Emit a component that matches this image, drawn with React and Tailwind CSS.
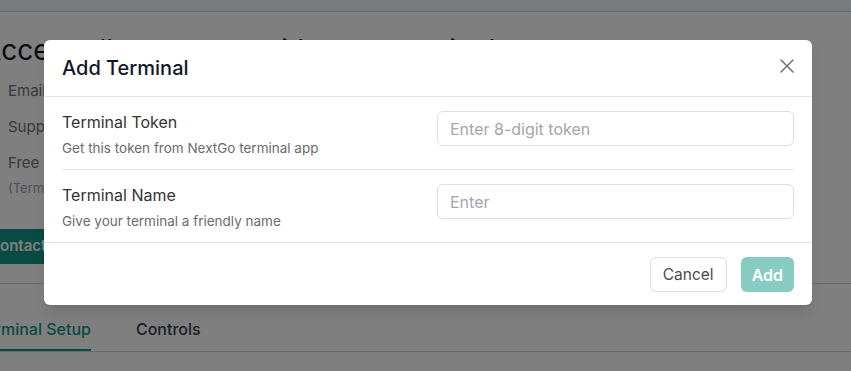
import React, { useState } from 'react';

const font = { fontFamily: 'Inter, "Noto Sans", sans-serif' };

function Field({ label, hint, placeholder, last }) {
	const [value, setValue] = useState('');
	return (
		<div className={`grid grid-cols-2 gap-[18px] pt-[14px] pb-[11px] ${last ? '' : 'border-b border-[#e4e4ea]'}`}>
			<div className="pt-[1px]">
				<p className="text-[16px] leading-5 text-[#333]">{label}</p>
				<p className="mt-[6px] text-[13.5px] leading-5 text-[#6b6b6b]">{hint}</p>
			</div>
			<input
				value={value}
				onChange={(e) => setValue(e.target.value)}
				placeholder={placeholder}
				className="h-[35px] w-full rounded-md border border-[#dcdce4] px-3 text-[16px] text-[#333] placeholder:text-[#a3a6ae] outline-none"
			/>
		</div>
	);
}

function Page() {
	return (
		<div className="min-h-[371px] overflow-hidden bg-white">
			<div className="h-3 bg-gray-100 border-b border-gray-300"></div>
			<div className="pl-2">
				<h1 className="-ml-[26px] mt-5 text-[28px] leading-9 text-gray-900 whitespace-nowrap">Accept all payments with your terminal</h1>
				<ul className="mt-[11px] flex flex-col gap-3 text-[15px] leading-6 text-gray-500">
					<li>Email notifications</li>
					<li>Support 24/7</li>
					<li>Free setup</li>
				</ul>
				<p className="mt-1 text-[13px] leading-[18px] text-gray-400">(Terms apply)</p>
				<button className="-ml-[35px] mt-8 h-[35px] rounded-md bg-[#0f9784] px-4 text-[15px] font-semibold text-white">Contact Us</button>
			</div>
			<div className="mt-[19px] border-t border-gray-300"></div>
			<div className="flex gap-[45px] border-b border-gray-300">
				<div className="-ml-6 border-b-2 border-[#0f9784] pt-[33px] pb-2 text-[16px] leading-6 font-medium text-[#0f9784]">Terminal Setup</div>
				<div className="pt-[33px] pb-2 text-[16px] leading-6 font-medium text-gray-700">Controls</div>
			</div>
		</div>
	);
}

export default function App() {
	return (
		<div className="relative h-[371px] w-[851px] overflow-hidden" style={font}>
			<Page />
			<div className="absolute inset-0 bg-black/50 pl-[44px] pt-10">
				<div className="w-[768px] rounded-md bg-white shadow-lg">
					<div className="flex h-[57px] items-center justify-between border-b border-[#e4e4ea] px-[18px]">
						<h2 className="text-xl font-medium text-gray-900">Add Terminal</h2>
						<button className="mb-[5px] text-gray-500" aria-label="Close">
							<svg width="14" height="14" viewBox="0 0 14 14" fill="none" stroke="currentColor" strokeWidth="1.5" strokeLinecap="round">
								<path d="M1 1l12 12M13 1L1 13" />
							</svg>
						</button>
					</div>
					<div className="px-[18px]">
						<Field label="Terminal Token" hint="Get this token from NextGo terminal app" placeholder="Enter 8-digit token" />
						<Field label="Terminal Name" hint="Give your terminal a friendly name" placeholder="Enter" last />
					</div>
					<div className="flex justify-end gap-[14px] border-t border-[#e4e4ea] px-[18px] pt-[14px] pb-[13px]">
						<button className="h-[35px] rounded-md border border-[#dcdce4] px-3 text-[15.5px] text-[#4b4b4b]">Cancel</button>
						<button className="h-[35px] rounded-md bg-[#87cbc2] px-[11px] text-[16px] font-semibold text-white">Add</button>
					</div>
				</div>
			</div>
		</div>
	);
}
